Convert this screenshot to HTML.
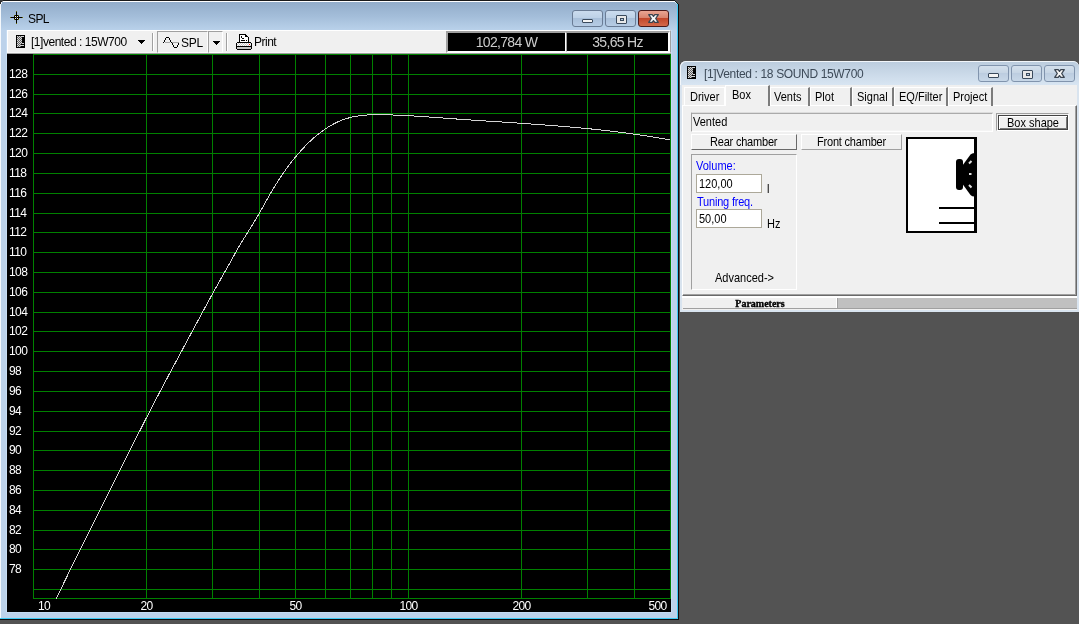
<!DOCTYPE html>
<html><head><meta charset="utf-8">
<style>
*{box-sizing:border-box;margin:0;padding:0}
html,body{width:1079px;height:624px;overflow:hidden;background:#535353;font-family:"Liberation Sans",sans-serif;font-size:12px;color:#000}
.a{position:absolute}
/* main window */
#mw{left:0;top:0;width:679px;height:620px;background:#bcd2ea;border-top:1px solid #1a1a1a;border-right:1px solid #120a0a;border-bottom:1px solid #120a0a}
#mw .hl{left:0;top:0;width:675px;height:1px;background:#fff}
#mw .tb{left:0;top:1px;width:677px;height:28px;background:linear-gradient(#93adca,#a3bdd9 50%,#b9d1ea)}
#mw .cy{left:677px;top:3px;width:1px;height:615px;background:#3ccaf4}
#mw .cyb{left:0;top:617px;width:678px;height:1px;background:#3ccaf4}
#mw .lh{left:0;top:2px;width:1px;height:616px;background:#f4f8fc}
.ttl{left:28px;top:12px;font-size:12px;color:#000;line-height:14px;letter-spacing:-0.6px}
/* caption buttons */
.cb{height:17px;border:1px solid #6a7c95;border-radius:3px;background:linear-gradient(#cbdcee 0,#bcd0e6 50%,#a9c0da 50%,#b6cce4 100%)}
.cb.x{border-color:#4a1a1a;background:linear-gradient(#e9a593 0,#d7806a 50%,#c2472b 50%,#d46a4c 100%)}
/* toolbar */
#tbar{left:7px;top:30px;width:664px;height:23px;background:#f0f0f0;border-top:1px solid #fff;border-left:1px solid #fff;border-bottom:1px solid #f8f8f8;border-right:1px solid #a0a0a0}
.sep{width:2px;height:18px;border-left:1px solid #a0a0a0;border-right:1px solid #fff}
.plot{position:absolute;left:7px;top:53px}
.disp{color:#cccccc;font-size:14px;text-align:center;line-height:16px;letter-spacing:-0.7px;padding-top:1px}
/* dialog */
#dlg{left:680px;top:61px;width:399px;height:251px;background:#d9e4ef;border-top-left-radius:6px;border-top-right-radius:6px}
#dlg .tb{left:0;top:0;width:399px;height:24px;background:linear-gradient(#bccdde,#d8e5f2);border-top:1px solid #f2f6fa;border-left:1px solid #f2f6fa;border-top-left-radius:6px;border-top-right-radius:6px}
.dcb{height:17px;border:1px solid #8194ad;border-radius:3px;background:linear-gradient(#d4e0ec,#c5d4e4 50%,#bccde0 50%,#c8d8e8)}
.cl{background:#f0f0f0}
.ms{font-size:11px;line-height:13px;transform:translateY(1px) scaleY(1.125);transform-origin:0 10px}
.tab{border-top:1px solid #fff;border-left:1px solid #fff;border-right:2px solid #7c7c7c;height:18px;font-size:11px;line-height:16px;padding-left:5px}
.btn{background:#f0f0f0;border-top:1px solid #fff;border-left:1px solid #fff;border-right:1px solid #696969;border-bottom:1px solid #696969;font-size:11px;line-height:14px;text-align:center}
.tbx{background:#fff;border:1px solid #aca899;font-size:11px;line-height:15px;padding-left:3px}
.blue{color:#0000ff}
</style></head><body><div class="a" style="left:0;top:0;width:1079px;height:624px;will-change:transform">
<!-- main window -->
<div id="mw" class="a">
  <div class="a hl"></div>
  <div class="a tb"></div>
  <div class="a lh"></div>
  <div class="a cy"></div>
  <div class="a cyb"></div>
  <div class="a" style="left:6px;top:29px;width:1px;height:583px;background:#c6dcf2"></div>
  <div class="a" style="left:6px;top:611px;width:666px;height:1px;background:#c6dcf2"></div>
  <div class="a" style="left:671px;top:29px;width:1px;height:583px;background:#c6dcf2"></div>
</div>
<svg class="a" style="left:0;top:0" width="4" height="4" shape-rendering="crispEdges"><rect x="0" y="0" width="3" height="1" fill="#3a3a3a"/><rect x="0" y="1" width="2" height="1" fill="#2a2a2a"/><rect x="2" y="1" width="1" height="1" fill="#9a9a9a"/><rect x="0" y="2" width="1" height="2" fill="#2a2a2a"/><rect x="1" y="2" width="1" height="2" fill="#e8eef6"/></svg>
<svg class="a" style="left:675px;top:0" width="4" height="4" shape-rendering="crispEdges"><rect x="0" y="0" width="4" height="1" fill="#535353"/><rect x="1" y="1" width="3" height="1" fill="#535353"/><rect x="0" y="1" width="1" height="1" fill="#1a2a2e"/><rect x="2" y="2" width="2" height="1" fill="#535353"/><rect x="1" y="2" width="1" height="1" fill="#1a2226"/><rect x="0" y="2" width="1" height="1" fill="#d0f0f8"/><rect x="3" y="3" width="1" height="1" fill="#535353"/><rect x="2" y="3" width="1" height="1" fill="#141a1c"/><rect x="1" y="3" width="1" height="1" fill="#a8e8f8"/></svg>
<svg class="a" style="left:10px;top:11px" width="13" height="13" shape-rendering="crispEdges"><rect x="6" y="1" width="1" height="1" fill="#000"/><rect x="6" y="2" width="1" height="1" fill="#000"/><rect x="6" y="3" width="1" height="1" fill="#000"/><rect x="6" y="4" width="1" height="1" fill="#000"/><rect x="6" y="5" width="1" height="1" fill="#000"/><rect x="6" y="7" width="1" height="1" fill="#000"/><rect x="6" y="8" width="1" height="1" fill="#000"/><rect x="6" y="9" width="1" height="1" fill="#000"/><rect x="6" y="10" width="1" height="1" fill="#000"/><rect x="6" y="11" width="1" height="1" fill="#000"/><rect x="1" y="6" width="1" height="1" fill="#000"/><rect x="2" y="6" width="1" height="1" fill="#000"/><rect x="3" y="6" width="1" height="1" fill="#000"/><rect x="4" y="6" width="1" height="1" fill="#000"/><rect x="5" y="6" width="1" height="1" fill="#000"/><rect x="7" y="6" width="1" height="1" fill="#000"/><rect x="8" y="6" width="1" height="1" fill="#000"/><rect x="9" y="6" width="1" height="1" fill="#000"/><rect x="10" y="6" width="1" height="1" fill="#000"/><rect x="11" y="6" width="1" height="1" fill="#000"/><rect x="4" y="5" width="1" height="1" fill="#000"/><rect x="4" y="6" width="1" height="1" fill="#000"/><rect x="4" y="7" width="1" height="1" fill="#000"/><rect x="5" y="4" width="1" height="1" fill="#000"/><rect x="5" y="6" width="1" height="1" fill="#000"/><rect x="5" y="8" width="1" height="1" fill="#000"/><rect x="6" y="4" width="1" height="1" fill="#000"/><rect x="6" y="5" width="1" height="1" fill="#000"/><rect x="6" y="7" width="1" height="1" fill="#000"/><rect x="6" y="8" width="1" height="1" fill="#000"/><rect x="7" y="4" width="1" height="1" fill="#000"/><rect x="7" y="6" width="1" height="1" fill="#000"/><rect x="7" y="8" width="1" height="1" fill="#000"/><rect x="8" y="5" width="1" height="1" fill="#000"/><rect x="8" y="6" width="1" height="1" fill="#000"/><rect x="8" y="7" width="1" height="1" fill="#000"/><rect x="6" y="0" width="1" height="1" fill="#6b6b00"/><rect x="6" y="12" width="1" height="1" fill="#6b6b00"/><rect x="0" y="6" width="1" height="1" fill="#6b6b00"/><rect x="12" y="6" width="1" height="1" fill="#6b6b00"/><rect x="4" y="4" width="1" height="1" fill="#6b6b00"/><rect x="8" y="4" width="1" height="1" fill="#6b6b00"/><rect x="4" y="8" width="1" height="1" fill="#6b6b00"/><rect x="8" y="8" width="1" height="1" fill="#6b6b00"/><rect x="6" y="6" width="1" height="1" fill="#6b6b00"/><rect x="5" y="5" width="1" height="1" fill="#fff"/><rect x="7" y="5" width="1" height="1" fill="#fff"/><rect x="5" y="7" width="1" height="1" fill="#fff"/><rect x="7" y="7" width="1" height="1" fill="#fff"/></svg>
<div class="a ttl">SPL</div>
<div class="a cb" style="left:572px;top:10px;width:31px"><div class="a" style="left:9px;top:8px;width:11px;height:4px;background:#f4f4f4;border:1px solid #3a4a5c;border-radius:1px"></div></div>
<div class="a cb" style="left:605px;top:10px;width:31px"><div class="a" style="left:9px;top:3px;width:11px;height:9px;background:#e8e8e8;border:1px solid #3a4a5c;border-radius:1px;transform:translate(1px,1px)"><div class="a" style="left:3px;top:2px;width:4px;height:3px;border:1px solid #3a4a5c;background:#b8cce2"></div></div></div>
<div class="a cb x" style="left:638px;top:10px;width:31px"><svg class="a" style="left:8px;top:2px" width="13" height="11" viewBox="0 0 13 11"><path d="M1.7 1.7H5.2L6.5 3.4L7.8 1.7H11.3L8.7 5.5L11.3 9.3H7.8L6.5 7.6L5.2 9.3H1.7L4.3 5.5Z" fill="#f6f6f6" stroke="#3a4450" stroke-width="1.3" stroke-linejoin="round"/></svg></div>

<div id="tbar" class="a"></div>
<!-- toolbar contents -->
<svg class="a" style="left:16px;top:35px" width="9" height="13" shape-rendering="crispEdges"><rect x="0" y="0" width="9" height="13" fill="#000"/><rect x="2" y="1" width="1" height="1" fill="#606060"/><rect x="4" y="1" width="1" height="1" fill="#606060"/><rect x="1" y="2" width="1" height="1" fill="#606060"/><rect x="3" y="2" width="1" height="1" fill="#606060"/><rect x="5" y="2" width="1" height="1" fill="#606060"/><rect x="2" y="3" width="1" height="1" fill="#606060"/><rect x="4" y="3" width="1" height="1" fill="#606060"/><rect x="1" y="4" width="1" height="1" fill="#606060"/><rect x="3" y="4" width="1" height="1" fill="#606060"/><rect x="5" y="4" width="1" height="1" fill="#606060"/><rect x="2" y="5" width="1" height="1" fill="#606060"/><rect x="4" y="5" width="1" height="1" fill="#606060"/><rect x="1" y="6" width="1" height="1" fill="#606060"/><rect x="3" y="6" width="1" height="1" fill="#606060"/><rect x="5" y="6" width="1" height="1" fill="#606060"/><rect x="2" y="7" width="1" height="1" fill="#606060"/><rect x="4" y="7" width="1" height="1" fill="#606060"/><rect x="1" y="8" width="1" height="1" fill="#606060"/><rect x="3" y="8" width="1" height="1" fill="#606060"/><rect x="5" y="8" width="1" height="1" fill="#606060"/><rect x="2" y="9" width="1" height="1" fill="#606060"/><rect x="4" y="9" width="1" height="1" fill="#606060"/><rect x="1" y="10" width="1" height="1" fill="#606060"/><rect x="3" y="10" width="1" height="1" fill="#606060"/><rect x="2" y="11" width="1" height="1" fill="#606060"/><rect x="4" y="11" width="1" height="1" fill="#606060"/><rect x="1" y="1" width="1" height="1" fill="#d8d8d8"/><rect x="3" y="1" width="1" height="1" fill="#d8d8d8"/><rect x="5" y="1" width="1" height="1" fill="#d8d8d8"/><rect x="2" y="2" width="1" height="1" fill="#d8d8d8"/><rect x="4" y="2" width="1" height="1" fill="#d8d8d8"/><rect x="1" y="3" width="1" height="1" fill="#d8d8d8"/><rect x="3" y="3" width="1" height="1" fill="#d8d8d8"/><rect x="5" y="3" width="1" height="1" fill="#d8d8d8"/><rect x="2" y="4" width="1" height="1" fill="#d8d8d8"/><rect x="4" y="4" width="1" height="1" fill="#d8d8d8"/><rect x="1" y="5" width="1" height="1" fill="#d8d8d8"/><rect x="3" y="5" width="1" height="1" fill="#d8d8d8"/><rect x="5" y="5" width="1" height="1" fill="#d8d8d8"/><rect x="2" y="6" width="1" height="1" fill="#d8d8d8"/><rect x="4" y="6" width="1" height="1" fill="#d8d8d8"/><rect x="1" y="7" width="1" height="1" fill="#d8d8d8"/><rect x="3" y="7" width="1" height="1" fill="#d8d8d8"/><rect x="5" y="7" width="1" height="1" fill="#d8d8d8"/><rect x="2" y="8" width="1" height="1" fill="#d8d8d8"/><rect x="4" y="8" width="1" height="1" fill="#d8d8d8"/><rect x="1" y="9" width="1" height="1" fill="#d8d8d8"/><rect x="3" y="9" width="1" height="1" fill="#d8d8d8"/><rect x="2" y="10" width="1" height="1" fill="#d8d8d8"/><rect x="4" y="10" width="1" height="1" fill="#d8d8d8"/><rect x="1" y="11" width="1" height="1" fill="#d8d8d8"/><rect x="3" y="11" width="1" height="1" fill="#d8d8d8"/><rect x="7" y="1" width="1" height="1" fill="#d8d8d8"/><rect x="6" y="1" width="1" height="1" fill="#d8d8d8"/><rect x="6" y="8" width="1" height="1" fill="#d8d8d8"/><rect x="7" y="8" width="1" height="1" fill="#d8d8d8"/><rect x="6" y="10" width="1" height="1" fill="#d8d8d8"/><rect x="7" y="10" width="1" height="1" fill="#d8d8d8"/><rect x="5" y="10" width="1" height="1" fill="#d8d8d8"/></svg>
<div class="a" style="left:31px;top:35px;font-size:12px;line-height:15px;color:#000;letter-spacing:-0.47px">[1]vented : 15W700</div>
<svg class="a" style="left:138px;top:40px" width="7" height="4" shape-rendering="crispEdges"><rect x="0" y="0" width="7" height="1"/><rect x="1" y="1" width="5" height="1"/><rect x="2" y="2" width="3" height="1"/><rect x="3" y="3" width="1" height="1"/></svg>
<div class="a sep" style="left:152px;top:33px"></div>
<div class="a" style="left:157px;top:31px;width:51px;height:22px;border-top:1px solid #a0a0a0;border-left:1px solid #a0a0a0;border-bottom:1px solid #fff;border-right:1px solid #fff"></div>
<svg class="a" style="left:162px;top:36px" width="20" height="13" shape-rendering="crispEdges"><rect x="3" y="6" width="1" height="1" fill="#a8a8a8"/><rect x="4" y="6" width="1" height="1" fill="#a8a8a8"/><rect x="5" y="6" width="1" height="1" fill="#a8a8a8"/><rect x="6" y="6" width="1" height="1" fill="#a8a8a8"/><rect x="7" y="6" width="1" height="1" fill="#a8a8a8"/><rect x="10" y="6" width="1" height="1" fill="#a8a8a8"/><rect x="11" y="6" width="1" height="1" fill="#a8a8a8"/><rect x="12" y="6" width="1" height="1" fill="#a8a8a8"/><rect x="13" y="6" width="1" height="1" fill="#a8a8a8"/><rect x="14" y="6" width="1" height="1" fill="#a8a8a8"/><rect x="15" y="6" width="1" height="1" fill="#a8a8a8"/><rect x="16" y="6" width="1" height="1" fill="#a8a8a8"/><rect x="1" y="6" width="1" height="1" fill="#000"/><rect x="2" y="5" width="1" height="1" fill="#000"/><rect x="2" y="4" width="1" height="1" fill="#000"/><rect x="3" y="3" width="1" height="1" fill="#000"/><rect x="3" y="2" width="1" height="1" fill="#000"/><rect x="4" y="1" width="1" height="1" fill="#000"/><rect x="5" y="1" width="1" height="1" fill="#000"/><rect x="6" y="1" width="1" height="1" fill="#000"/><rect x="7" y="2" width="1" height="1" fill="#000"/><rect x="7" y="3" width="1" height="1" fill="#000"/><rect x="8" y="4" width="1" height="1" fill="#000"/><rect x="8" y="5" width="1" height="1" fill="#000"/><rect x="9" y="6" width="1" height="1" fill="#000"/><rect x="10" y="7" width="1" height="1" fill="#000"/><rect x="10" y="8" width="1" height="1" fill="#000"/><rect x="11" y="9" width="1" height="1" fill="#000"/><rect x="11" y="10" width="1" height="1" fill="#000"/><rect x="12" y="11" width="1" height="1" fill="#000"/><rect x="13" y="11" width="1" height="1" fill="#000"/><rect x="14" y="11" width="1" height="1" fill="#000"/><rect x="15" y="10" width="1" height="1" fill="#000"/><rect x="15" y="9" width="1" height="1" fill="#000"/><rect x="16" y="8" width="1" height="1" fill="#000"/><rect x="16" y="7" width="1" height="1" fill="#000"/></svg>
<div class="a" style="left:181px;top:36px;font-size:12px;line-height:14px;letter-spacing:-0.3px">SPL</div>
<div class="a" style="left:208px;top:31px;width:15px;height:22px;border-top:1px solid #a0a0a0;border-left:1px solid #a0a0a0;border-bottom:1px solid #fff;border-right:1px solid #fff"></div>
<svg class="a" style="left:213px;top:41px" width="7" height="4" shape-rendering="crispEdges"><rect x="0" y="0" width="7" height="1"/><rect x="1" y="1" width="5" height="1"/><rect x="2" y="2" width="3" height="1"/><rect x="3" y="3" width="1" height="1"/></svg>
<div class="a sep" style="left:226px;top:33px"></div>
<svg class="a" style="left:236px;top:34px" width="16" height="16" shape-rendering="crispEdges"><rect x="4" y="1" width="1" height="1" fill="#fff"/><rect x="4" y="2" width="1" height="1" fill="#fff"/><rect x="4" y="3" width="1" height="1" fill="#fff"/><rect x="4" y="4" width="1" height="1" fill="#fff"/><rect x="4" y="5" width="1" height="1" fill="#fff"/><rect x="4" y="6" width="1" height="1" fill="#fff"/><rect x="4" y="7" width="1" height="1" fill="#fff"/><rect x="5" y="1" width="1" height="1" fill="#fff"/><rect x="5" y="4" width="1" height="1" fill="#fff"/><rect x="5" y="5" width="1" height="1" fill="#fff"/><rect x="5" y="7" width="1" height="1" fill="#fff"/><rect x="6" y="1" width="1" height="1" fill="#fff"/><rect x="6" y="2" width="1" height="1" fill="#fff"/><rect x="6" y="3" width="1" height="1" fill="#fff"/><rect x="6" y="5" width="1" height="1" fill="#fff"/><rect x="6" y="7" width="1" height="1" fill="#fff"/><rect x="7" y="1" width="1" height="1" fill="#fff"/><rect x="7" y="2" width="1" height="1" fill="#fff"/><rect x="7" y="3" width="1" height="1" fill="#fff"/><rect x="7" y="5" width="1" height="1" fill="#fff"/><rect x="7" y="7" width="1" height="1" fill="#fff"/><rect x="8" y="1" width="1" height="1" fill="#fff"/><rect x="8" y="2" width="1" height="1" fill="#fff"/><rect x="8" y="3" width="1" height="1" fill="#fff"/><rect x="8" y="4" width="1" height="1" fill="#fff"/><rect x="8" y="5" width="1" height="1" fill="#fff"/><rect x="8" y="7" width="1" height="1" fill="#fff"/><rect x="9" y="3" width="1" height="1" fill="#fff"/><rect x="9" y="4" width="1" height="1" fill="#fff"/><rect x="9" y="5" width="1" height="1" fill="#fff"/><rect x="9" y="6" width="1" height="1" fill="#fff"/><rect x="9" y="7" width="1" height="1" fill="#fff"/><rect x="10" y="3" width="1" height="1" fill="#fff"/><rect x="10" y="4" width="1" height="1" fill="#fff"/><rect x="10" y="5" width="1" height="1" fill="#fff"/><rect x="10" y="7" width="1" height="1" fill="#fff"/><rect x="11" y="4" width="1" height="1" fill="#fff"/><rect x="11" y="5" width="1" height="1" fill="#fff"/><rect x="11" y="6" width="1" height="1" fill="#fff"/><rect x="11" y="7" width="1" height="1" fill="#fff"/><rect x="1" y="9" width="1" height="1" fill="#fff"/><rect x="1" y="11" width="1" height="1" fill="#fff"/><rect x="2" y="10" width="1" height="1" fill="#fff"/><rect x="3" y="9" width="1" height="1" fill="#fff"/><rect x="3" y="11" width="1" height="1" fill="#fff"/><rect x="4" y="10" width="1" height="1" fill="#fff"/><rect x="5" y="9" width="1" height="1" fill="#fff"/><rect x="5" y="11" width="1" height="1" fill="#fff"/><rect x="6" y="10" width="1" height="1" fill="#fff"/><rect x="7" y="9" width="1" height="1" fill="#fff"/><rect x="7" y="11" width="1" height="1" fill="#fff"/><rect x="8" y="10" width="1" height="1" fill="#fff"/><rect x="9" y="9" width="1" height="1" fill="#fff"/><rect x="9" y="11" width="1" height="1" fill="#fff"/><rect x="10" y="10" width="1" height="1" fill="#fff"/><rect x="11" y="9" width="1" height="1" fill="#fff"/><rect x="11" y="11" width="1" height="1" fill="#fff"/><rect x="12" y="10" width="1" height="1" fill="#fff"/><rect x="13" y="9" width="1" height="1" fill="#fff"/><rect x="13" y="11" width="1" height="1" fill="#fff"/><rect x="14" y="10" width="1" height="1" fill="#fff"/><rect x="1" y="10" width="1" height="1" fill="#c8c8c8"/><rect x="1" y="13" width="1" height="1" fill="#c8c8c8"/><rect x="1" y="14" width="1" height="1" fill="#c8c8c8"/><rect x="2" y="9" width="1" height="1" fill="#c8c8c8"/><rect x="2" y="11" width="1" height="1" fill="#c8c8c8"/><rect x="2" y="13" width="1" height="1" fill="#c8c8c8"/><rect x="2" y="14" width="1" height="1" fill="#c8c8c8"/><rect x="3" y="10" width="1" height="1" fill="#c8c8c8"/><rect x="3" y="13" width="1" height="1" fill="#c8c8c8"/><rect x="3" y="14" width="1" height="1" fill="#c8c8c8"/><rect x="4" y="9" width="1" height="1" fill="#c8c8c8"/><rect x="4" y="11" width="1" height="1" fill="#c8c8c8"/><rect x="4" y="13" width="1" height="1" fill="#c8c8c8"/><rect x="4" y="14" width="1" height="1" fill="#c8c8c8"/><rect x="5" y="10" width="1" height="1" fill="#c8c8c8"/><rect x="5" y="13" width="1" height="1" fill="#c8c8c8"/><rect x="5" y="14" width="1" height="1" fill="#c8c8c8"/><rect x="6" y="9" width="1" height="1" fill="#c8c8c8"/><rect x="6" y="11" width="1" height="1" fill="#c8c8c8"/><rect x="6" y="13" width="1" height="1" fill="#c8c8c8"/><rect x="6" y="14" width="1" height="1" fill="#c8c8c8"/><rect x="7" y="10" width="1" height="1" fill="#c8c8c8"/><rect x="7" y="13" width="1" height="1" fill="#c8c8c8"/><rect x="7" y="14" width="1" height="1" fill="#c8c8c8"/><rect x="8" y="9" width="1" height="1" fill="#c8c8c8"/><rect x="8" y="11" width="1" height="1" fill="#c8c8c8"/><rect x="8" y="13" width="1" height="1" fill="#c8c8c8"/><rect x="8" y="14" width="1" height="1" fill="#c8c8c8"/><rect x="9" y="10" width="1" height="1" fill="#c8c8c8"/><rect x="9" y="13" width="1" height="1" fill="#c8c8c8"/><rect x="9" y="14" width="1" height="1" fill="#c8c8c8"/><rect x="10" y="9" width="1" height="1" fill="#c8c8c8"/><rect x="10" y="11" width="1" height="1" fill="#c8c8c8"/><rect x="10" y="13" width="1" height="1" fill="#c8c8c8"/><rect x="10" y="14" width="1" height="1" fill="#c8c8c8"/><rect x="11" y="10" width="1" height="1" fill="#c8c8c8"/><rect x="11" y="13" width="1" height="1" fill="#c8c8c8"/><rect x="11" y="14" width="1" height="1" fill="#c8c8c8"/><rect x="12" y="9" width="1" height="1" fill="#c8c8c8"/><rect x="12" y="11" width="1" height="1" fill="#c8c8c8"/><rect x="12" y="13" width="1" height="1" fill="#c8c8c8"/><rect x="12" y="14" width="1" height="1" fill="#c8c8c8"/><rect x="13" y="13" width="1" height="1" fill="#c8c8c8"/><rect x="13" y="14" width="1" height="1" fill="#c8c8c8"/><rect x="14" y="9" width="1" height="1" fill="#c8c8c8"/><rect x="14" y="11" width="1" height="1" fill="#c8c8c8"/><rect x="14" y="13" width="1" height="1" fill="#c8c8c8"/><rect x="14" y="14" width="1" height="1" fill="#c8c8c8"/><rect x="3" y="0" width="1" height="1" fill="#000"/><rect x="4" y="0" width="1" height="1" fill="#000"/><rect x="5" y="0" width="1" height="1" fill="#000"/><rect x="6" y="0" width="1" height="1" fill="#000"/><rect x="7" y="0" width="1" height="1" fill="#000"/><rect x="8" y="0" width="1" height="1" fill="#000"/><rect x="9" y="0" width="1" height="1" fill="#000"/><rect x="10" y="1" width="1" height="1" fill="#000"/><rect x="11" y="2" width="1" height="1" fill="#000"/><rect x="12" y="3" width="1" height="1" fill="#000"/><rect x="3" y="0" width="1" height="1" fill="#000"/><rect x="3" y="1" width="1" height="1" fill="#000"/><rect x="3" y="2" width="1" height="1" fill="#000"/><rect x="3" y="3" width="1" height="1" fill="#000"/><rect x="3" y="4" width="1" height="1" fill="#000"/><rect x="3" y="5" width="1" height="1" fill="#000"/><rect x="3" y="6" width="1" height="1" fill="#000"/><rect x="3" y="7" width="1" height="1" fill="#000"/><rect x="3" y="8" width="1" height="1" fill="#000"/><rect x="12" y="3" width="1" height="1" fill="#000"/><rect x="12" y="4" width="1" height="1" fill="#000"/><rect x="12" y="5" width="1" height="1" fill="#000"/><rect x="12" y="6" width="1" height="1" fill="#000"/><rect x="12" y="7" width="1" height="1" fill="#000"/><rect x="12" y="8" width="1" height="1" fill="#000"/><rect x="9" y="1" width="1" height="1" fill="#000"/><rect x="9" y="2" width="1" height="1" fill="#000"/><rect x="10" y="2" width="1" height="1" fill="#000"/><rect x="5" y="2" width="1" height="1" fill="#000"/><rect x="5" y="3" width="1" height="1" fill="#000"/><rect x="6" y="4" width="1" height="1" fill="#000"/><rect x="7" y="4" width="1" height="1" fill="#000"/><rect x="5" y="6" width="1" height="1" fill="#000"/><rect x="6" y="6" width="1" height="1" fill="#000"/><rect x="7" y="6" width="1" height="1" fill="#000"/><rect x="8" y="6" width="1" height="1" fill="#000"/><rect x="10" y="6" width="1" height="1" fill="#000"/><rect x="1" y="8" width="1" height="1" fill="#000"/><rect x="1" y="15" width="1" height="1" fill="#000"/><rect x="2" y="8" width="1" height="1" fill="#000"/><rect x="2" y="15" width="1" height="1" fill="#000"/><rect x="3" y="8" width="1" height="1" fill="#000"/><rect x="3" y="15" width="1" height="1" fill="#000"/><rect x="4" y="8" width="1" height="1" fill="#000"/><rect x="4" y="15" width="1" height="1" fill="#000"/><rect x="5" y="8" width="1" height="1" fill="#000"/><rect x="5" y="15" width="1" height="1" fill="#000"/><rect x="6" y="8" width="1" height="1" fill="#000"/><rect x="6" y="15" width="1" height="1" fill="#000"/><rect x="7" y="8" width="1" height="1" fill="#000"/><rect x="7" y="15" width="1" height="1" fill="#000"/><rect x="8" y="8" width="1" height="1" fill="#000"/><rect x="8" y="15" width="1" height="1" fill="#000"/><rect x="9" y="8" width="1" height="1" fill="#000"/><rect x="9" y="15" width="1" height="1" fill="#000"/><rect x="10" y="8" width="1" height="1" fill="#000"/><rect x="10" y="15" width="1" height="1" fill="#000"/><rect x="11" y="8" width="1" height="1" fill="#000"/><rect x="11" y="15" width="1" height="1" fill="#000"/><rect x="12" y="8" width="1" height="1" fill="#000"/><rect x="12" y="15" width="1" height="1" fill="#000"/><rect x="13" y="8" width="1" height="1" fill="#000"/><rect x="13" y="15" width="1" height="1" fill="#000"/><rect x="14" y="8" width="1" height="1" fill="#000"/><rect x="14" y="15" width="1" height="1" fill="#000"/><rect x="0" y="9" width="1" height="1" fill="#000"/><rect x="15" y="9" width="1" height="1" fill="#000"/><rect x="0" y="10" width="1" height="1" fill="#000"/><rect x="15" y="10" width="1" height="1" fill="#000"/><rect x="0" y="11" width="1" height="1" fill="#000"/><rect x="15" y="11" width="1" height="1" fill="#000"/><rect x="0" y="12" width="1" height="1" fill="#000"/><rect x="15" y="12" width="1" height="1" fill="#000"/><rect x="0" y="13" width="1" height="1" fill="#000"/><rect x="15" y="13" width="1" height="1" fill="#000"/><rect x="0" y="14" width="1" height="1" fill="#000"/><rect x="15" y="14" width="1" height="1" fill="#000"/><rect x="1" y="12" width="1" height="1" fill="#000"/><rect x="2" y="12" width="1" height="1" fill="#000"/><rect x="3" y="12" width="1" height="1" fill="#000"/><rect x="4" y="12" width="1" height="1" fill="#000"/><rect x="5" y="12" width="1" height="1" fill="#000"/><rect x="6" y="12" width="1" height="1" fill="#000"/><rect x="7" y="12" width="1" height="1" fill="#000"/><rect x="8" y="12" width="1" height="1" fill="#000"/><rect x="9" y="12" width="1" height="1" fill="#000"/><rect x="10" y="12" width="1" height="1" fill="#000"/><rect x="11" y="12" width="1" height="1" fill="#000"/><rect x="12" y="12" width="1" height="1" fill="#000"/><rect x="13" y="12" width="1" height="1" fill="#000"/><rect x="14" y="12" width="1" height="1" fill="#000"/><rect x="13" y="10" width="1" height="1" fill="#f00"/></svg>
<div class="a" style="left:254px;top:35px;font-size:12px;line-height:14px;letter-spacing:-0.5px">Print</div>
<!-- displays -->
<div class="a" style="left:446px;top:31px;width:224px;height:22px;border-top:1px solid #a0a0a0;border-left:1px solid #a0a0a0;border-bottom:1px solid #fff;border-right:1px solid #fff"></div>
<div class="a" style="left:447px;top:32px;width:119px;height:20px;border-top:1px solid #a0a0a0;border-left:1px solid #a0a0a0;border-bottom:1px solid #fff;border-right:1px solid #fff;background:#000"></div>
<div class="a disp" style="left:448px;top:33px;width:117px;height:18px">102,784 W</div>
<div class="a" style="left:566px;top:32px;width:103px;height:20px;border-top:1px solid #a0a0a0;border-left:1px solid #a0a0a0;border-bottom:1px solid #fff;border-right:1px solid #fff;background:#000"></div>
<div class="a disp" style="left:567px;top:33px;width:101px;height:18px">35,65 Hz</div>

<svg class="plot" width="664" height="559" viewBox="0 0 664 559"><rect x="0" y="0" width="664" height="559" fill="#000"/><path d="M26 1.5H664 M26 21.5H664 M26 41.5H664 M26 60.5H664 M26 80.5H664 M26 100.5H664 M26 120.5H664 M26 140.5H664 M26 160.5H664 M26 179.5H664 M26 199.5H664 M26 219.5H664 M26 239.5H664 M26 259.5H664 M26 278.5H664 M26 298.5H664 M26 318.5H664 M26 338.5H664 M26 358.5H664 M26 378.5H664 M26 397.5H664 M26 417.5H664 M26 437.5H664 M26 457.5H664 M26 477.5H664 M26 496.5H664 M26 516.5H664 M26 536.5H664 M26 545.5H664 M26.5 1V546 M139.5 1V546 M205.5 1V546 M252.5 1V546 M288.5 1V546 M318.5 1V546 M343.5 1V546 M365.5 1V546 M384.5 1V546 M401.5 1V546 M514.5 1V546 M580.5 1V546 M627.5 1V546 M663.5 1V546" stroke="#008000" stroke-width="1" fill="none" shape-rendering="crispEdges"/><polyline points="49.40,545.50 49.5,545.29 50.5,543.18 51.5,541.09 52.5,538.99 53.5,536.91 54.5,534.82 55.5,532.74 56.5,530.67 57.5,528.60 58.5,526.54 59.5,524.48 60.5,522.42 61.5,520.37 62.5,518.32 63.5,516.28 64.5,514.23 65.5,512.20 66.5,510.16 67.5,508.13 68.5,506.10 69.5,504.07 70.5,502.05 71.5,500.03 72.5,498.01 73.5,495.99 74.5,493.98 75.5,491.96 76.5,489.95 77.5,487.94 78.5,485.93 79.5,483.93 80.5,481.92 81.5,479.92 82.5,477.91 83.5,475.91 84.5,473.91 85.5,471.91 86.5,469.91 87.5,467.90 88.5,465.90 89.5,463.90 90.5,461.90 91.5,459.90 92.5,457.90 93.5,455.90 94.5,453.89 95.5,451.89 96.5,449.89 97.5,447.89 98.5,445.89 99.5,443.89 100.5,441.89 101.5,439.90 102.5,437.90 103.5,435.90 104.5,433.90 105.5,431.91 106.5,429.91 107.5,427.91 108.5,425.92 109.5,423.93 110.5,421.93 111.5,419.94 112.5,417.95 113.5,415.96 114.5,413.97 115.5,411.98 116.5,410.00 117.5,408.01 118.5,406.03 119.5,404.04 120.5,402.06 121.5,400.08 122.5,398.10 123.5,396.12 124.5,394.15 125.5,392.17 126.5,390.20 127.5,388.23 128.5,386.26 129.5,384.29 130.5,382.32 131.5,380.35 132.5,378.39 133.5,376.42 134.5,374.46 135.5,372.50 136.5,370.53 137.5,368.57 138.5,366.62 139.5,364.66 140.5,362.70 141.5,360.75 142.5,358.80 143.5,356.86 144.5,354.92 145.5,352.99 146.5,351.06 147.5,349.14 148.5,347.22 149.5,345.31 150.5,343.40 151.5,341.49 152.5,339.59 153.5,337.69 154.5,335.79 155.5,333.90 156.5,332.01 157.5,330.12 158.5,328.24 159.5,326.36 160.5,324.48 161.5,322.60 162.5,320.72 163.5,318.85 164.5,316.98 165.5,315.11 166.5,313.24 167.5,311.37 168.5,309.51 169.5,307.64 170.5,305.78 171.5,303.91 172.5,302.05 173.5,300.19 174.5,298.32 175.5,296.46 176.5,294.60 177.5,292.73 178.5,290.87 179.5,289.01 180.5,287.14 181.5,285.27 182.5,283.41 183.5,281.54 184.5,279.68 185.5,277.82 186.5,275.95 187.5,274.09 188.5,272.23 189.5,270.37 190.5,268.51 191.5,266.65 192.5,264.79 193.5,262.94 194.5,261.09 195.5,259.24 196.5,257.39 197.5,255.55 198.5,253.70 199.5,251.86 200.5,250.03 201.5,248.19 202.5,246.37 203.5,244.54 204.5,242.72 205.5,240.90 206.5,239.08 207.5,237.27 208.5,235.47 209.5,233.66 210.5,231.87 211.5,230.08 212.5,228.29 213.5,226.51 214.5,224.73 215.5,222.96 216.5,221.20 217.5,219.44 218.5,217.68 219.5,215.93 220.5,214.17 221.5,212.40 222.5,210.62 223.5,208.83 224.5,207.02 225.5,205.19 226.5,203.36 227.5,201.54 228.5,199.74 229.5,197.96 230.5,196.21 231.5,194.48 232.5,192.78 233.5,191.10 234.5,189.43 235.5,187.78 236.5,186.15 237.5,184.52 238.5,182.91 239.5,181.30 240.5,179.69 241.5,178.09 242.5,176.49 243.5,174.89 244.5,173.28 245.5,171.66 246.5,170.04 247.5,168.41 248.5,166.76 249.5,165.09 250.5,163.41 251.5,161.71 252.5,159.99 253.5,158.24 254.5,156.47 255.5,154.69 256.5,152.90 257.5,151.10 258.5,149.30 259.5,147.50 260.5,145.71 261.5,143.94 262.5,142.18 263.5,140.44 264.5,138.72 265.5,137.03 266.5,135.36 267.5,133.71 268.5,132.08 269.5,130.48 270.5,128.90 271.5,127.33 272.5,125.80 273.5,124.28 274.5,122.78 275.5,121.31 276.5,119.85 277.5,118.42 278.5,117.01 279.5,115.61 280.5,114.24 281.5,112.89 282.5,111.56 283.5,110.24 284.5,108.95 285.5,107.68 286.5,106.42 287.5,105.18 288.5,103.96 289.5,102.77 290.5,101.58 291.5,100.42 292.5,99.28 293.5,98.15 294.5,97.04 295.5,95.95 296.5,94.87 297.5,93.82 298.5,92.78 299.5,91.76 300.5,90.76 301.5,89.78 302.5,88.81 303.5,87.86 304.5,86.93 305.5,86.02 306.5,85.13 307.5,84.25 308.5,83.40 309.5,82.56 310.5,81.73 311.5,80.93 312.5,80.15 313.5,79.38 314.5,78.63 315.5,77.90 316.5,77.19 317.5,76.49 318.5,75.81 319.5,75.15 320.5,74.51 321.5,73.89 322.5,73.28 323.5,72.69 324.5,72.12 325.5,71.57 326.5,71.03 327.5,70.51 328.5,70.01 329.5,69.52 330.5,69.05 331.5,68.60 332.5,68.16 333.5,67.75 334.5,67.34 335.5,66.96 336.5,66.59 337.5,66.24 338.5,65.90 339.5,65.58 340.5,65.28 341.5,64.99 342.5,64.72 343.5,64.46 344.5,64.22 345.5,63.99 346.5,63.77 347.5,63.57 348.5,63.38 349.5,63.21 350.5,63.04 351.5,62.89 352.5,62.75 353.5,62.62 354.5,62.50 355.5,62.39 356.5,62.29 357.5,62.20 358.5,62.12 359.5,62.05 360.5,61.99 361.5,61.93 362.5,61.88 363.5,61.84 364.5,61.81 365.5,61.78 366.5,61.76 367.5,61.74 368.5,61.73 369.5,61.72 370.5,61.72 371.5,61.72 372.5,61.72 373.5,61.73 374.5,61.74 375.5,61.75 376.5,61.77 377.5,61.78 378.5,61.80 379.5,61.82 380.5,61.85 381.5,61.87 382.5,61.90 383.5,61.92 384.5,61.95 385.5,61.99 386.5,62.02 387.5,62.05 388.5,62.09 389.5,62.13 390.5,62.17 391.5,62.21 392.5,62.25 393.5,62.30 394.5,62.34 395.5,62.39 396.5,62.44 397.5,62.49 398.5,62.54 399.5,62.59 400.5,62.64 401.5,62.70 402.5,62.75 403.5,62.81 404.5,62.87 405.5,62.93 406.5,62.99 407.5,63.05 408.5,63.11 409.5,63.17 410.5,63.23 411.5,63.30 412.5,63.36 413.5,63.43 414.5,63.50 415.5,63.56 416.5,63.63 417.5,63.70 418.5,63.77 419.5,63.84 420.5,63.91 421.5,63.98 422.5,64.05 423.5,64.12 424.5,64.19 425.5,64.27 426.5,64.34 427.5,64.41 428.5,64.48 429.5,64.56 430.5,64.63 431.5,64.70 432.5,64.78 433.5,64.85 434.5,64.92 435.5,65.00 436.5,65.07 437.5,65.15 438.5,65.22 439.5,65.29 440.5,65.36 441.5,65.44 442.5,65.51 443.5,65.58 444.5,65.65 445.5,65.72 446.5,65.80 447.5,65.87 448.5,65.94 449.5,66.01 450.5,66.08 451.5,66.15 452.5,66.22 453.5,66.29 454.5,66.36 455.5,66.42 456.5,66.49 457.5,66.56 458.5,66.63 459.5,66.70 460.5,66.77 461.5,66.83 462.5,66.90 463.5,66.97 464.5,67.03 465.5,67.10 466.5,67.17 467.5,67.24 468.5,67.30 469.5,67.37 470.5,67.43 471.5,67.50 472.5,67.57 473.5,67.63 474.5,67.70 475.5,67.76 476.5,67.83 477.5,67.90 478.5,67.96 479.5,68.03 480.5,68.09 481.5,68.16 482.5,68.22 483.5,68.29 484.5,68.35 485.5,68.42 486.5,68.48 487.5,68.55 488.5,68.61 489.5,68.68 490.5,68.74 491.5,68.81 492.5,68.87 493.5,68.94 494.5,69.00 495.5,69.07 496.5,69.14 497.5,69.20 498.5,69.27 499.5,69.33 500.5,69.40 501.5,69.46 502.5,69.53 503.5,69.59 504.5,69.66 505.5,69.73 506.5,69.79 507.5,69.86 508.5,69.93 509.5,69.99 510.5,70.06 511.5,70.13 512.5,70.19 513.5,70.26 514.5,70.33 515.5,70.40 516.5,70.46 517.5,70.53 518.5,70.60 519.5,70.67 520.5,70.74 521.5,70.81 522.5,70.88 523.5,70.95 524.5,71.02 525.5,71.09 526.5,71.16 527.5,71.23 528.5,71.30 529.5,71.37 530.5,71.44 531.5,71.51 532.5,71.59 533.5,71.66 534.5,71.73 535.5,71.81 536.5,71.88 537.5,71.95 538.5,72.03 539.5,72.10 540.5,72.18 541.5,72.25 542.5,72.33 543.5,72.41 544.5,72.48 545.5,72.56 546.5,72.64 547.5,72.72 548.5,72.80 549.5,72.88 550.5,72.96 551.5,73.04 552.5,73.12 553.5,73.20 554.5,73.28 555.5,73.36 556.5,73.44 557.5,73.53 558.5,73.61 559.5,73.70 560.5,73.78 561.5,73.87 562.5,73.95 563.5,74.04 564.5,74.13 565.5,74.21 566.5,74.30 567.5,74.39 568.5,74.48 569.5,74.57 570.5,74.66 571.5,74.76 572.5,74.85 573.5,74.94 574.5,75.03 575.5,75.13 576.5,75.22 577.5,75.32 578.5,75.42 579.5,75.51 580.5,75.61 581.5,75.71 582.5,75.81 583.5,75.91 584.5,76.01 585.5,76.11 586.5,76.21 587.5,76.32 588.5,76.42 589.5,76.53 590.5,76.63 591.5,76.74 592.5,76.85 593.5,76.95 594.5,77.06 595.5,77.17 596.5,77.28 597.5,77.39 598.5,77.51 599.5,77.62 600.5,77.73 601.5,77.85 602.5,77.97 603.5,78.08 604.5,78.20 605.5,78.32 606.5,78.44 607.5,78.56 608.5,78.68 609.5,78.80 610.5,78.93 611.5,79.05 612.5,79.18 613.5,79.30 614.5,79.43 615.5,79.56 616.5,79.69 617.5,79.82 618.5,79.95 619.5,80.08 620.5,80.22 621.5,80.35 622.5,80.49 623.5,80.62 624.5,80.76 625.5,80.90 626.5,81.04 627.5,81.18 628.5,81.32 629.5,81.47 630.5,81.61 631.5,81.76 632.5,81.90 633.5,82.05 634.5,82.20 635.5,82.35 636.5,82.50 637.5,82.65 638.5,82.81 639.5,82.96 640.5,83.12 641.5,83.28 642.5,83.44 643.5,83.60 644.5,83.76 645.5,83.92 646.5,84.08 647.5,84.25 648.5,84.41 649.5,84.58 650.5,84.75 651.5,84.92 652.5,85.09 653.5,85.26 654.5,85.44 655.5,85.61 656.5,85.79 657.5,85.97 658.5,86.15 659.5,86.33 660.5,86.51 661.5,86.69 662.5,86.88 663.5,87.07" stroke="#d4d4d4" stroke-width="1" fill="none" shape-rendering="crispEdges"/><g fill="#fff" font-family="Liberation Sans" font-size="12" letter-spacing="-0.6"><text x="2" y="24.5">128</text><text x="2" y="44.5">126</text><text x="2" y="63.5">124</text><text x="2" y="83.5">122</text><text x="2" y="103.5">120</text><text x="2" y="123.5">118</text><text x="2" y="143.5">116</text><text x="2" y="163.5">114</text><text x="2" y="182.5">112</text><text x="2" y="202.5">110</text><text x="2" y="222.5">108</text><text x="2" y="242.5">106</text><text x="2" y="262.5">104</text><text x="2" y="281.5">102</text><text x="2" y="301.5">100</text><text x="2" y="321.5">98</text><text x="2" y="341.5">96</text><text x="2" y="361.5">94</text><text x="2" y="381.5">92</text><text x="2" y="400.5">90</text><text x="2" y="420.5">88</text><text x="2" y="440.5">86</text><text x="2" y="460.5">84</text><text x="2" y="480.5">82</text><text x="2" y="499.5">80</text><text x="2" y="519.5">78</text><text x="37" y="557" text-anchor="middle">10</text><text x="139.5" y="557" text-anchor="middle">20</text><text x="288.5" y="557" text-anchor="middle">50</text><text x="401.5" y="557" text-anchor="middle">100</text><text x="514.5" y="557" text-anchor="middle">200</text><text x="650.5" y="557" text-anchor="middle">500</text></g></svg>
<div class="a" style="left:7px;top:53px;width:664px;height:1px;background:#a0a0a0"></div>

<!-- dialog -->
<div id="dlg" class="a">
  <div class="a tb"></div>
  <div class="a cl" style="left:2px;top:24px;width:395px;height:225px"></div>
</div>
<svg class="a" style="left:687px;top:66px" width="9" height="13" shape-rendering="crispEdges"><rect x="0" y="0" width="9" height="13" fill="#000"/><rect x="2" y="1" width="1" height="1" fill="#606060"/><rect x="4" y="1" width="1" height="1" fill="#606060"/><rect x="1" y="2" width="1" height="1" fill="#606060"/><rect x="3" y="2" width="1" height="1" fill="#606060"/><rect x="5" y="2" width="1" height="1" fill="#606060"/><rect x="2" y="3" width="1" height="1" fill="#606060"/><rect x="4" y="3" width="1" height="1" fill="#606060"/><rect x="1" y="4" width="1" height="1" fill="#606060"/><rect x="3" y="4" width="1" height="1" fill="#606060"/><rect x="5" y="4" width="1" height="1" fill="#606060"/><rect x="2" y="5" width="1" height="1" fill="#606060"/><rect x="4" y="5" width="1" height="1" fill="#606060"/><rect x="1" y="6" width="1" height="1" fill="#606060"/><rect x="3" y="6" width="1" height="1" fill="#606060"/><rect x="5" y="6" width="1" height="1" fill="#606060"/><rect x="2" y="7" width="1" height="1" fill="#606060"/><rect x="4" y="7" width="1" height="1" fill="#606060"/><rect x="1" y="8" width="1" height="1" fill="#606060"/><rect x="3" y="8" width="1" height="1" fill="#606060"/><rect x="5" y="8" width="1" height="1" fill="#606060"/><rect x="2" y="9" width="1" height="1" fill="#606060"/><rect x="4" y="9" width="1" height="1" fill="#606060"/><rect x="1" y="10" width="1" height="1" fill="#606060"/><rect x="3" y="10" width="1" height="1" fill="#606060"/><rect x="2" y="11" width="1" height="1" fill="#606060"/><rect x="4" y="11" width="1" height="1" fill="#606060"/><rect x="1" y="1" width="1" height="1" fill="#d8d8d8"/><rect x="3" y="1" width="1" height="1" fill="#d8d8d8"/><rect x="5" y="1" width="1" height="1" fill="#d8d8d8"/><rect x="2" y="2" width="1" height="1" fill="#d8d8d8"/><rect x="4" y="2" width="1" height="1" fill="#d8d8d8"/><rect x="1" y="3" width="1" height="1" fill="#d8d8d8"/><rect x="3" y="3" width="1" height="1" fill="#d8d8d8"/><rect x="5" y="3" width="1" height="1" fill="#d8d8d8"/><rect x="2" y="4" width="1" height="1" fill="#d8d8d8"/><rect x="4" y="4" width="1" height="1" fill="#d8d8d8"/><rect x="1" y="5" width="1" height="1" fill="#d8d8d8"/><rect x="3" y="5" width="1" height="1" fill="#d8d8d8"/><rect x="5" y="5" width="1" height="1" fill="#d8d8d8"/><rect x="2" y="6" width="1" height="1" fill="#d8d8d8"/><rect x="4" y="6" width="1" height="1" fill="#d8d8d8"/><rect x="1" y="7" width="1" height="1" fill="#d8d8d8"/><rect x="3" y="7" width="1" height="1" fill="#d8d8d8"/><rect x="5" y="7" width="1" height="1" fill="#d8d8d8"/><rect x="2" y="8" width="1" height="1" fill="#d8d8d8"/><rect x="4" y="8" width="1" height="1" fill="#d8d8d8"/><rect x="1" y="9" width="1" height="1" fill="#d8d8d8"/><rect x="3" y="9" width="1" height="1" fill="#d8d8d8"/><rect x="2" y="10" width="1" height="1" fill="#d8d8d8"/><rect x="4" y="10" width="1" height="1" fill="#d8d8d8"/><rect x="1" y="11" width="1" height="1" fill="#d8d8d8"/><rect x="3" y="11" width="1" height="1" fill="#d8d8d8"/><rect x="7" y="1" width="1" height="1" fill="#d8d8d8"/><rect x="6" y="1" width="1" height="1" fill="#d8d8d8"/><rect x="6" y="8" width="1" height="1" fill="#d8d8d8"/><rect x="7" y="8" width="1" height="1" fill="#d8d8d8"/><rect x="6" y="10" width="1" height="1" fill="#d8d8d8"/><rect x="7" y="10" width="1" height="1" fill="#d8d8d8"/><rect x="5" y="10" width="1" height="1" fill="#d8d8d8"/></svg>
<div class="a" style="left:704px;top:67px;font-size:12px;line-height:14px;color:#3d4a58;letter-spacing:-0.35px">[1]Vented : 18 SOUND 15W700</div>
<div class="a dcb" style="left:978px;top:65px;width:31px"><div class="a" style="left:9px;top:7px;width:11px;height:5px;background:#f4f4f4;border:1px solid #3a4a5c;border-radius:1px"></div></div>
<div class="a dcb" style="left:1011px;top:65px;width:31px"><div class="a" style="left:9px;top:3px;width:11px;height:9px;background:#e8e8e8;border:1px solid #3a4a5c;border-radius:1px;transform:translate(1px,1px)"><div class="a" style="left:3px;top:2px;width:4px;height:3px;border:1px solid #3a4a5c;background:#b8cce2"></div></div></div>
<div class="a dcb" style="left:1044px;top:65px;width:31px"><svg class="a" style="left:8px;top:2px" width="13" height="11" viewBox="0 0 13 11"><path d="M1.7 1.7H5.2L6.5 3.4L7.8 1.7H11.3L8.7 5.5L11.3 9.3H7.8L6.5 7.6L5.2 9.3H1.7L4.3 5.5Z" fill="#f6f6f6" stroke="#3a4450" stroke-width="1.3" stroke-linejoin="round"/></svg></div>

<!-- tab panel -->
<div class="a" style="left:682px;top:105px;width:395px;height:191px;border-top:1px solid #fff;border-left:1px solid #fff;border-right:1px solid #696969;border-bottom:1px solid #696969;box-shadow:inset -1px -1px 0 #a0a0a0;background:#f0f0f0"></div>
<div class="a tab" style="left:684px;top:87px;width:41px;height:19px;border-right:1px solid #fff"></div>
<div class="a tab" style="left:725px;top:85px;width:45px;height:21px;background:#f0f0f0;border-bottom:none"></div>
<div class="a tab" style="left:770px;top:87px;width:40px;height:19px"></div>
<div class="a tab" style="left:810px;top:87px;width:42px;height:19px"></div>
<div class="a tab" style="left:852px;top:87px;width:42px;height:19px"></div>
<div class="a tab" style="left:894px;top:87px;width:54px;height:19px"></div>
<div class="a tab" style="left:948px;top:87px;width:45px;height:19px"></div>
<div class="a ms" style="left:690px;top:90px">Driver</div>
<div class="a ms" style="left:732px;top:88px">Box</div>
<div class="a ms" style="left:774px;top:90px">Vents</div>
<div class="a ms" style="left:815px;top:90px">Plot</div>
<div class="a ms" style="left:857px;top:90px">Signal</div>
<div class="a ms" style="left:899px;top:90px">EQ/Filter</div>
<div class="a ms" style="left:953px;top:90px">Project</div>

<div class="a ms" style="left:691px;top:113px;width:302px;height:17px;border-top:1px solid #a0a0a0;border-left:1px solid #a0a0a0;border-bottom:1px solid #fff;border-right:1px solid #fff;padding-left:1px;line-height:14px">Vented</div>
<div class="a" style="left:996px;top:113px;width:73px;height:18px;border-top:1px solid #a0a0a0;border-left:1px solid #a0a0a0;border-bottom:1px solid #fff;border-right:1px solid #fff"></div>
<div class="a btn" style="left:998px;top:115px;width:70px;height:15px;border:1px solid #444;box-shadow:inset 1px 1px 0 #fff,inset -1px -1px 0 #777"></div>
<div class="a ms" style="left:1007px;top:116px">Box shape</div>
<div class="a btn" style="left:691px;top:134px;width:106px;height:16px"></div>
<div class="a ms" style="left:710px;top:135px;letter-spacing:-0.2px">Rear chamber</div>
<div class="a btn" style="left:801px;top:134px;width:101px;height:16px;border-right-color:#a0a0a0;border-bottom-color:#a0a0a0"></div>
<div class="a ms" style="left:817px;top:135px;letter-spacing:-0.2px">Front chamber</div>
<div class="a" style="left:691px;top:154px;width:106px;height:136px;border-top:1px solid #a0a0a0;border-left:1px solid #a0a0a0;border-bottom:1px solid #fff;border-right:1px solid #fff"></div>
<div class="a ms blue" style="left:696px;top:159px">Volume:</div>
<div class="a tbx" style="left:696px;top:174px;width:66px;height:19px"></div>
<div class="a ms" style="left:699px;top:177px">120,00</div>
<div class="a ms" style="left:767px;top:182px">l</div>
<div class="a ms blue" style="left:697px;top:195px;letter-spacing:-0.2px">Tuning freq.</div>
<div class="a tbx" style="left:696px;top:209px;width:66px;height:19px"></div>
<div class="a ms" style="left:699px;top:212px">50,00</div>
<div class="a ms" style="left:767px;top:217px">Hz</div>
<div class="a ms" style="left:715px;top:271px">Advanced-&gt;</div>

<svg class="a" style="left:906px;top:137px" width="72" height="96" viewBox="0 0 72 96" shape-rendering="crispEdges">
  <rect x="0" y="0" width="71" height="96" fill="#000"/>
  <rect x="2" y="2" width="66" height="92" fill="#fff"/>
  <rect x="50" y="22" width="7" height="31" rx="3" fill="#000" shape-rendering="auto"/>
  <path d="M56.5 28.5L64.5 17.5Q66 16 68.5 16V59.5Q66 59.5 64.5 58L56.5 47Z" fill="#000" shape-rendering="auto"/>
  <path d="M63 26.5L65.5 24M63 37H65.5M63 48L65.5 50.5" stroke="#e0e0e0" stroke-width="2" shape-rendering="auto"/>
  <rect x="33" y="70" width="36" height="2" fill="#000"/>
  <rect x="33" y="85" width="36" height="2" fill="#000"/>
</svg>

<!-- status bar -->
<div class="a" style="left:682px;top:296px;width:395px;height:14px;background:#f0f0f0;border-top:2px solid #fff"></div>
<div class="a" style="left:683px;top:298px;width:155px;height:11px;border-bottom:1px solid #a0a0a0;border-right:1px solid #a0a0a0;box-shadow:inset -1px 0 0 #fff;font-family:'Liberation Serif',serif;font-weight:bold;font-size:10px;line-height:10px;text-align:center;padding-top:1px;-webkit-text-stroke:0.35px #000">Parameters</div>
<div class="a" style="left:838px;top:298px;width:239px;height:11px;background:#c0c0c0;border-bottom:1px solid #a0a0a0"></div>
</div></body></html>
